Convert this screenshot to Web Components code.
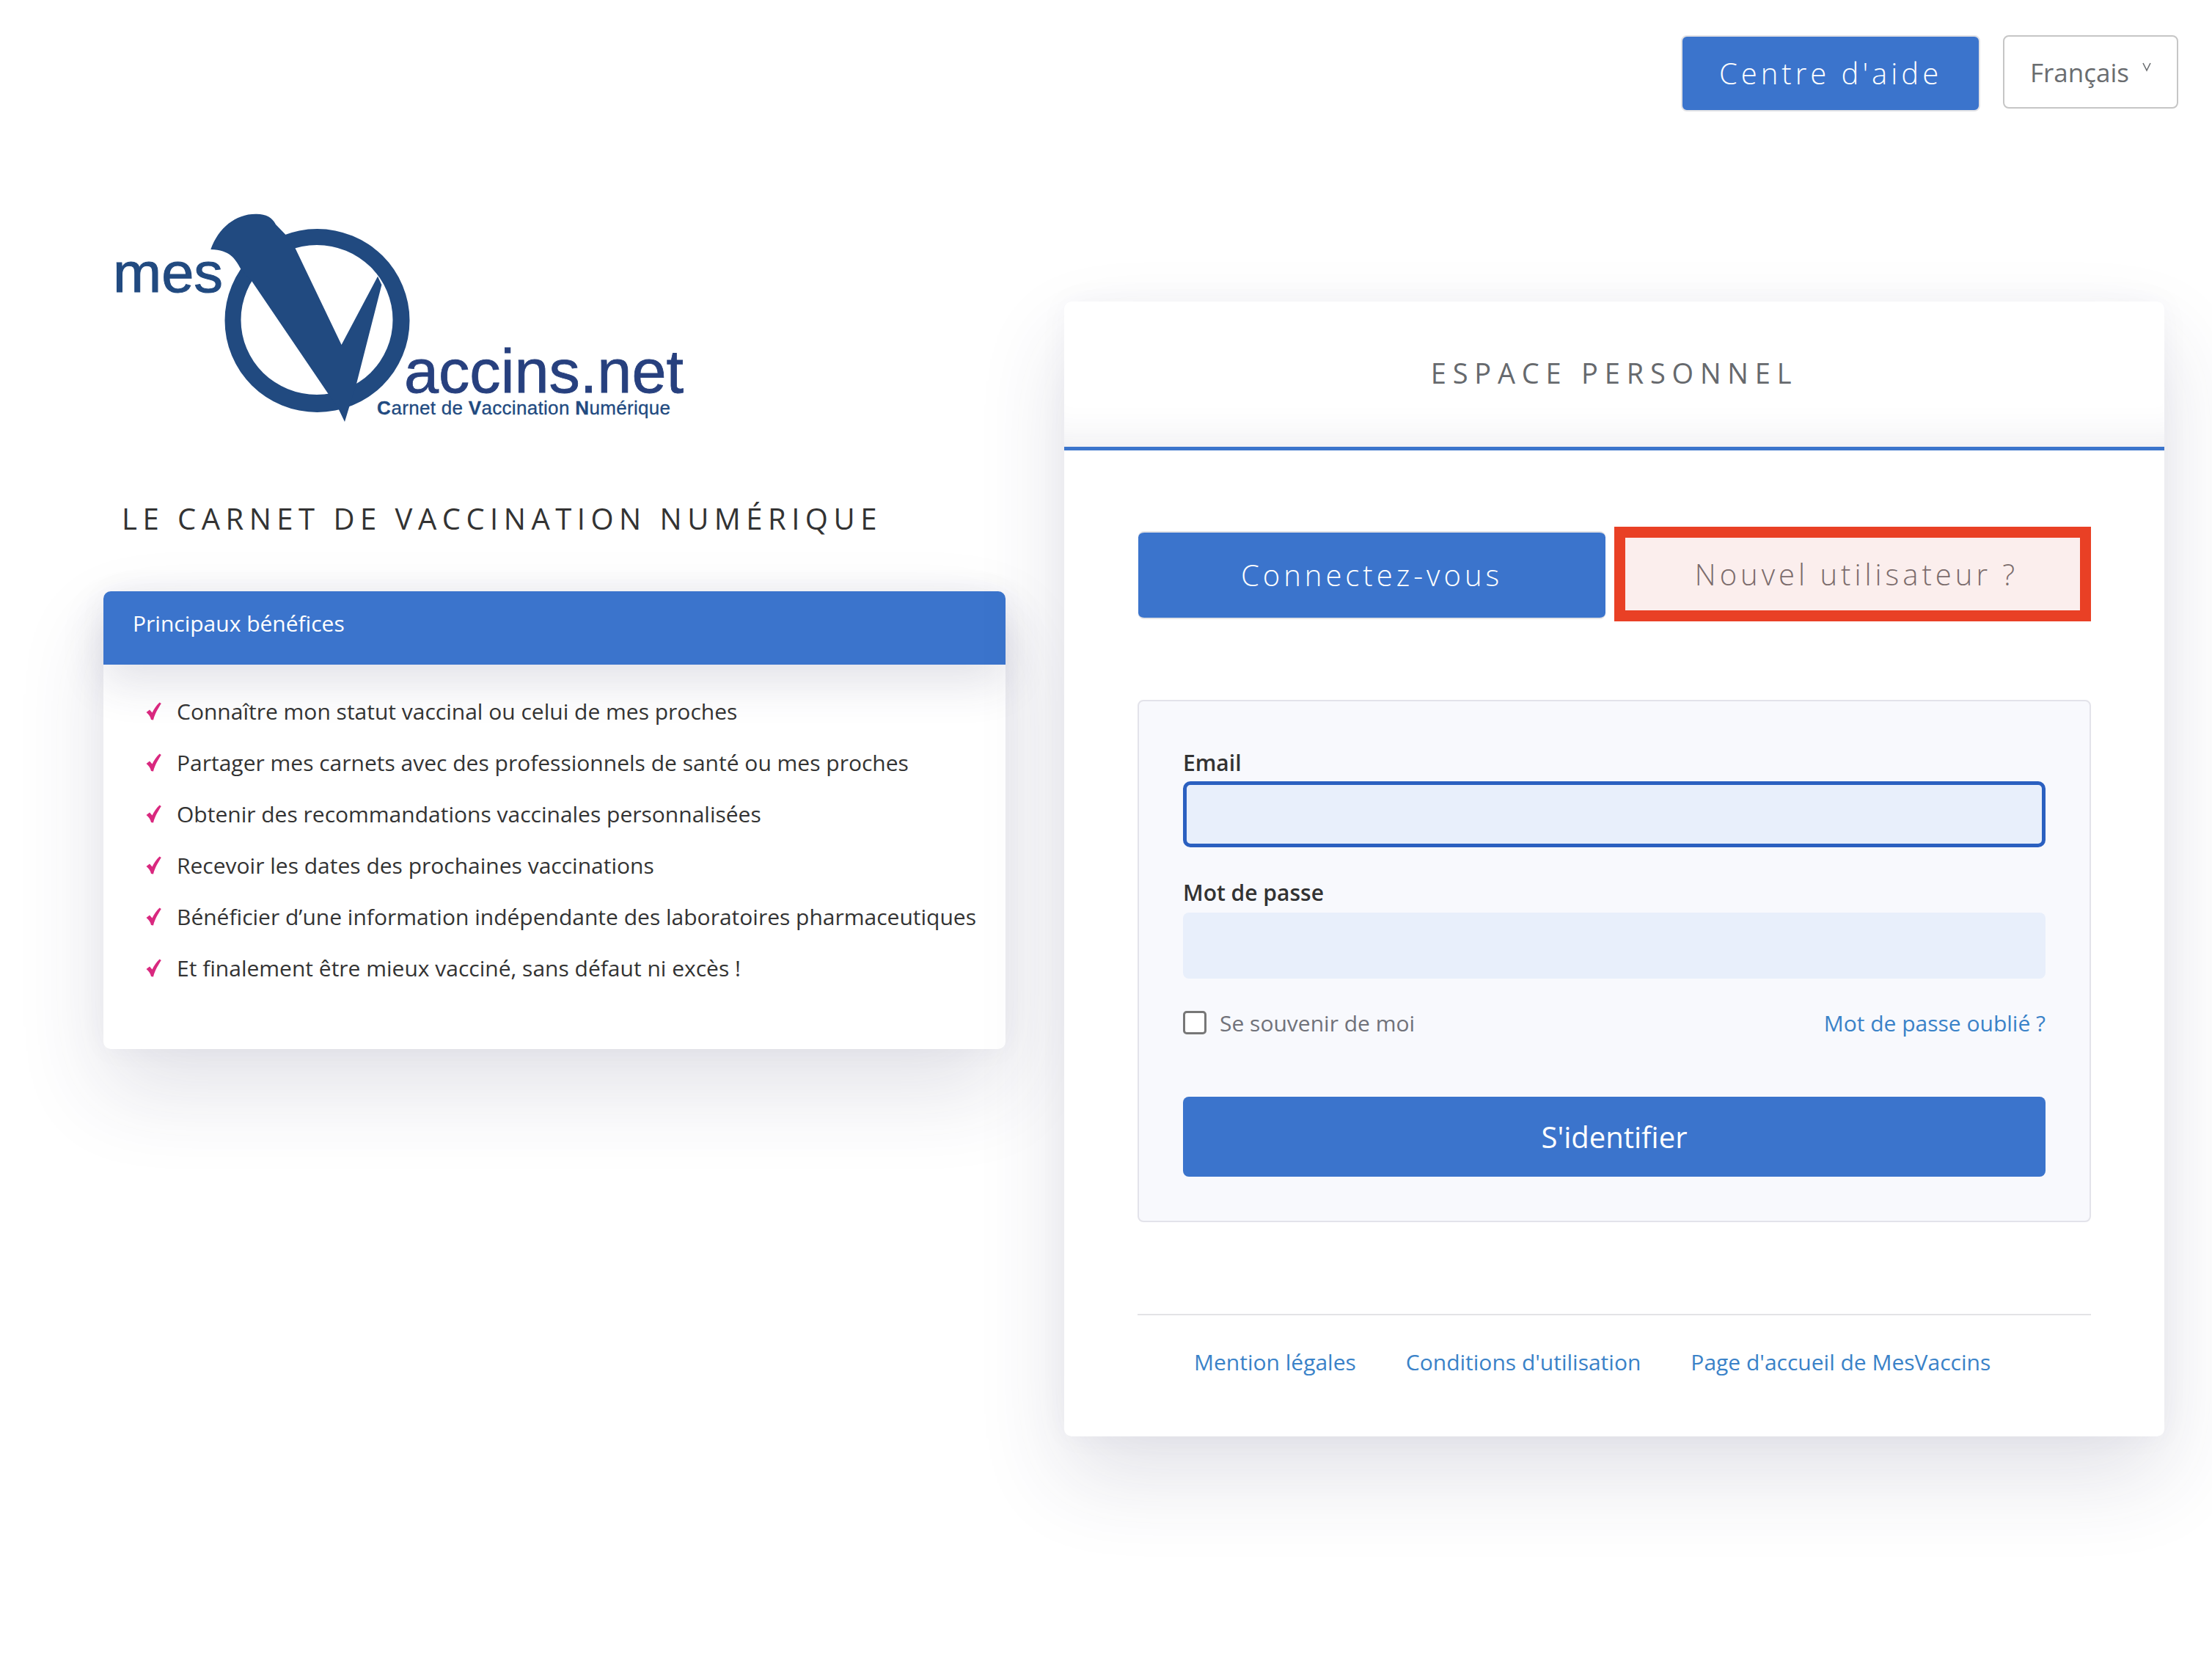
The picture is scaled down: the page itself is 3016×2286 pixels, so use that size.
<!DOCTYPE html>
<html lang="fr">
<head>
<meta charset="utf-8">
<title>MesVaccins</title>
<style>
  html, body { margin: 0; padding: 0; background: #fff; }
  body { font-family: "Open Sans", "Liberation Sans", sans-serif; color: #333; }
</style>
</head>
<body>
<app-page>
  <top-bar slot="top"></top-bar>
  <logo-mark slot="left"></logo-mark>
  <page-title slot="left">LE CARNET DE VACCINATION NUMÉRIQUE</page-title>
  <benefits-card slot="left" heading="Principaux bénéfices">
    <benefit-item>Connaître mon statut vaccinal ou celui de mes proches</benefit-item>
    <benefit-item>Partager mes carnets avec des professionnels de santé ou mes proches</benefit-item>
    <benefit-item>Obtenir des recommandations vaccinales personnalisées</benefit-item>
    <benefit-item>Recevoir les dates des prochaines vaccinations</benefit-item>
    <benefit-item>Bénéficier d’une information indépendante des laboratoires pharmaceutiques</benefit-item>
    <benefit-item>Et finalement être mieux vacciné, sans défaut ni excès !</benefit-item>
  </benefits-card>
  <login-card slot="right"></login-card>
</app-page>

<script>
/* page : barre du haut puis deux colonnes */
class AppPage extends HTMLElement {
    constructor() {
        super();
        this.attachShadow({ mode: 'open' });
        this.shadowRoot.innerHTML = `
            <style>
                :host { display: block; width: 3016px; height: 2286px; overflow: hidden; background: #fff; }
                .columns {
                    display: grid;
                    grid-template-columns: 1230px 1500px;
                    column-gap: 80px;
                    padding: 108px 0 0 141px;
                    align-items: start;
                }
                .left { display: flex; flex-direction: column; }
                .right { padding-top: 151px; }
            </style>
            <slot name="top"></slot>
            <div class="columns">
                <div class="left"><slot name="left"></slot></div>
                <div class="right"><slot name="right"></slot></div>
            </div>
        `;
    }
}

class TopBar extends HTMLElement {
    constructor() {
        super();
        this.attachShadow({ mode: 'open' });
        this.shadowRoot.innerHTML = `
            <style>
                :host { display: flex; justify-content: flex-end; align-items: flex-start; gap: 31px; padding: 48px 46px 0 0; height: 104px; }
                .help {
                    box-sizing: border-box; width: 408px; height: 104px; padding-bottom: 2px;
                    display: flex; align-items: center; justify-content: center;
                    background: #3b74cc; border: 2px solid #e3e3e6; border-radius: 8px;
                    color: #fff; font-size: 40px; font-weight: 300; letter-spacing: 5px;
                }
                .lang {
                    box-sizing: border-box; width: 239px; height: 100px;
                    display: flex; align-items: center; padding-left: 35px;
                    background: #fff; border: 2px solid #c6c6c6; border-radius: 8px;
                    color: #6a6d70; font-size: 35px;
                }
                .lang svg { margin: -14px 0 0 18px; }
            </style>
            <div class="help">Centre d'aide</div>
            <div class="lang">Français
                <svg width="12" height="14" viewBox="0 0 12 14"><path d="M1 2 L6 12 L11 2" fill="none" stroke="#6a6d70" stroke-width="1.6"/></svg>
            </div>
        `;
    }
}

/* logo dessiné en svg, le texte reste du texte */
class LogoMark extends HTMLElement {
    constructor() {
        super();
        this.attachShadow({ mode: 'open' });
        this.shadowRoot.innerHTML = `
            <style>
                :host { display: block; height: 340px; margin-left: -21px; }
                svg { display: block; }
                text { font-family: "Liberation Sans", Arial, sans-serif; }
                .tag { font-size: 26px; letter-spacing: .32px; fill: #214a80; stroke: #214a80; stroke-width: .3px; }
                .tag.b { font-weight: 700; }
            </style>
            <svg width="860" height="340" viewBox="0 0 860 340">
                <path fill="#214a80" fill-rule="evenodd" d="M186.5 177 a126 125 0 1 0 252 0 a126 125 0 1 0 -252 0 Z M208.5 176 a103.5 102 0 1 1 207 0 a103.5 102 0 1 1 -207 0 Z"/>
                <path fill="#214a80" d="M167.3 80 C178 50 202 31 230 31.7 C243 32 251 36 256 46 L268.8 59.3 L282.5 78.3 L345.6 210 L395 116.7 L400.4 128.3 L366.4 261.7 L356.6 293.3 L350 315 L341.2 296.7 L327.5 276.7 L223.3 123.3 L208.4 106.7 C200 92 194 81 167.3 80 Z"/>
                <text x="34" y="138" font-size="76" fill="#214a80" stroke="#214a80" stroke-width="1" textLength="150" lengthAdjust="spacingAndGlyphs">mes</text>
                <text x="431" y="275" font-size="83" fill="#27407e" stroke="#27407e" stroke-width=".8" textLength="381" lengthAdjust="spacingAndGlyphs">accins.net</text>
                <text class="tag b" x="394" y="305">C</text>
                <text class="tag" x="413.4" y="305">arnet de</text>
                <text class="tag b" x="518.8" y="305">V</text>
                <text class="tag" x="536.4" y="305">accination</text>
                <text class="tag b" x="664.2" y="305">N</text>
                <text class="tag" x="683.4" y="305">umérique</text>
            </svg>
        `;
    }
}

class PageTitle extends HTMLElement {
    constructor() {
        super();
        this.attachShadow({ mode: 'open' });
        this.shadowRoot.innerHTML = `
            <style>
                :host {
                    display: block; margin: 74px 0 0 25px; height: 66px; line-height: 66px;
                    font-size: 40px; letter-spacing: 7.5px; color: #333; white-space: nowrap;
                }
            </style>
            <slot></slot>
        `;
    }
}

class BenefitsCard extends HTMLElement {
    constructor() {
        super();
        this.attachShadow({ mode: 'open' });
        this.shadowRoot.innerHTML = `
            <style>
                :host {
                    display: block; margin-top: 66px; height: 624px; background: #fff; border-radius: 10px;
                    box-shadow: 0 55px 120px rgba(50, 50, 93, .14), 0 0 40px rgba(50, 50, 93, .04);
                }
                .head {
                    height: 100px; box-sizing: border-box; padding: 23px 0 0 40px;
                    background: #3b74cc; color: #fff; font-size: 30px; line-height: 42px;
                    border-radius: 10px 10px 0 0;
                    box-shadow: 0 25px 60px rgba(50, 50, 93, .14);
                }
                .body { padding: 28px 40px 0 58px; }
            </style>
            <div class="head"></div>
            <div class="body"><slot></slot></div>
        `;
        this.shadowRoot.querySelector('.head').textContent = this.getAttribute('heading');
    }
}

class BenefitItem extends HTMLElement {
    constructor() {
        super();
        this.attachShadow({ mode: 'open' });
        this.shadowRoot.innerHTML = `
            <style>
                :host {
                    display: flex; align-items: center; height: 70px;
                    font-size: 30px; color: #333; white-space: nowrap;
                }
                svg { flex: none; margin-right: 21px; }
            </style>
            <svg width="21" height="25" viewBox="0 0 21 25"><path fill="#d9287f" d="M0.5 14 L5 10.5 L8.5 14.5 C11 9.5 14 4.5 18.5 0.5 L20.8 2 C16.5 9 12.5 15 10 24.5 L7 24 C6 19.5 4 17 0.5 14 Z"/></svg>
            <slot></slot>
        `;
    }
}

class TabButton extends HTMLElement {
    constructor() {
        super();
        this.attachShadow({ mode: 'open' });
        this.shadowRoot.innerHTML = `
            <style>
                :host {
                    display: flex; box-sizing: border-box; align-items: center; justify-content: center;
                    font-size: 40px; font-weight: 300; letter-spacing: 5px; white-space: nowrap;
                }
                :host([variant="on"]) {
                    width: 637px; height: 120px; margin: 6px 0 0 1px; flex: none; padding-bottom: 2px;
                    background: #3b74cc; color: #fff; border-radius: 8px; border: solid #e3e3e6; border-width: 2px 0;
                }
                :host([variant="off"]) {
                    width: 650px; height: 129px; margin-left: 12px; flex: none; padding-left: 11px;
                    background: #fbeeed; color: #7b6c6c; border: 15px solid #e94025;
                }
            </style>
            <slot></slot>
        `;
    }
}

class FormField extends HTMLElement {
    constructor() {
        super();
        this.attachShadow({ mode: 'open' });
        this.shadowRoot.innerHTML = `
            <style>
                :host { display: block; }
                label { display: block; height: 47px; line-height: 44px; font-size: 30px; font-weight: 600; color: #333; }
                :host(:not([focused])) label { height: 49px; }
                .box { box-sizing: border-box; height: 90px; background: #e8effb; border-radius: 8px; border: 5px solid transparent; }
                :host([focused]) .box { border-color: #2b60c0; border-radius: 10px; }
            </style>
            <label><slot></slot></label>
            <div class="box"></div>
        `;
    }
}

class LoginCard extends HTMLElement {
    constructor() {
        super();
        this.attachShadow({ mode: 'open' });
        this.shadowRoot.innerHTML = `
            <style>
                :host {
                    display: block; height: 1547px; background: #fff; border-radius: 10px;
                    box-shadow: 0 55px 120px rgba(50, 50, 93, .14), 0 0 40px rgba(50, 50, 93, .04);
                }
                .title {
                    box-sizing: border-box; height: 203px; padding-top: 70px; text-align: center;
                    border-bottom: 5px solid #3b74cc; border-radius: 10px 10px 0 0;
                    box-shadow: inset 0 -60px 60px -60px rgba(50, 50, 93, .12);
                    font-size: 38px; line-height: 54px; letter-spacing: 8.8px; color: #66696d;
                }
                .content { padding: 0 100px; }
                .tabs { display: flex; padding-top: 104px; height: 129px; }
                .panel {
                    box-sizing: border-box; margin-top: 107px; height: 712px; padding: 62px 60px 0 60px;
                    background: #f8f9fd; border: 2px solid #e3e3ea; border-radius: 8px;
                }
                form-field + form-field { margin-top: 40px; }
                .row {
                    display: flex; justify-content: space-between; align-items: center;
                    margin-top: 38px; height: 44px; font-size: 30px;
                }
                .check { display: flex; align-items: center; gap: 18px; color: #70727a; }
                .check i { display: block; box-sizing: border-box; width: 32px; height: 32px; border: 3px solid #777; border-radius: 5px; background: #fff; }
                a { color: #3a82c8; text-decoration: none; }
                .submit {
                    margin-top: 79px; height: 109px; display: flex; align-items: center; justify-content: center;
                    background: #3b74cc; border-radius: 8px; color: #fff; font-size: 40px;
                }
                .foot {
                    margin-top: 125px; border-top: 2px solid #e3e3e6; padding: 42px 0 0 77px;
                    display: flex; gap: 68px; font-size: 30px; line-height: 44px;
                }
            </style>
            <div class="title">ESPACE PERSONNEL</div>
            <div class="content">
                <div class="tabs">
                    <tab-button variant="on">Connectez-vous</tab-button>
                    <tab-button variant="off">Nouvel utilisateur ?</tab-button>
                </div>
                <div class="panel">
                    <form-field focused>Email</form-field>
                    <form-field>Mot de passe</form-field>
                    <div class="row">
                        <span class="check"><i></i>Se souvenir de moi</span>
                        <a>Mot de passe oublié ?</a>
                    </div>
                    <div class="submit">S'identifier</div>
                </div>
                <div class="foot">
                    <a>Mention légales</a>
                    <a>Conditions d'utilisation</a>
                    <a>Page d'accueil de MesVaccins</a>
                </div>
            </div>
        `;
    }
}

customElements.define('app-page', AppPage);
customElements.define('top-bar', TopBar);
customElements.define('logo-mark', LogoMark);
customElements.define('page-title', PageTitle);
customElements.define('benefits-card', BenefitsCard);
customElements.define('benefit-item', BenefitItem);
customElements.define('tab-button', TabButton);
customElements.define('form-field', FormField);
customElements.define('login-card', LoginCard);
</script>
</body>
</html>
